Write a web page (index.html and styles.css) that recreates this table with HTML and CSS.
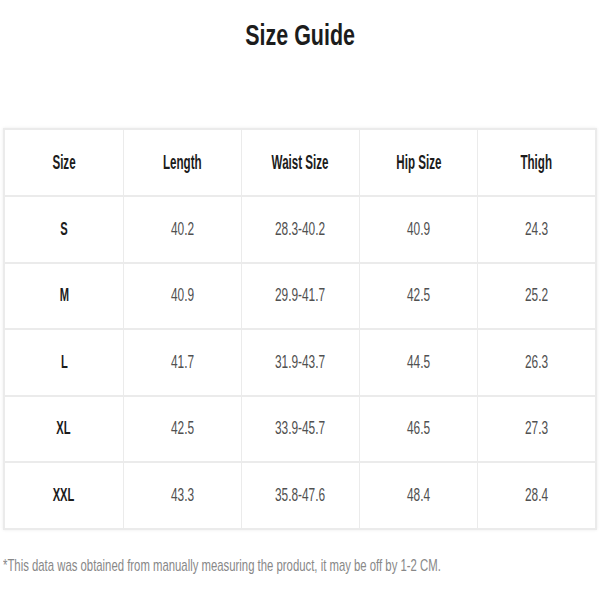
FILE: index.html
```html
<!DOCTYPE html>
<html>
<head>
<meta charset="utf-8">
<link rel="stylesheet" href="styles.css">
</head>
<body>
<div class="page">
  <h1 class="title"><span class="t">Size Guide</span></h1>
  <div class="table">
    <div class="row head">
      <div class="cell"><span class="t">Size</span></div><div class="cell"><span class="t">Length</span></div><div class="cell"><span class="t">Waist Size</span></div><div class="cell"><span class="t">Hip Size</span></div><div class="cell"><span class="t">Thigh</span></div>
    </div>
    <div class="row"><div class="cell size"><span class="t">S</span></div><div class="cell"><span class="t">40.2</span></div><div class="cell"><span class="t">28.3-40.2</span></div><div class="cell"><span class="t">40.9</span></div><div class="cell"><span class="t">24.3</span></div></div>
    <div class="row"><div class="cell size"><span class="t">M</span></div><div class="cell"><span class="t">40.9</span></div><div class="cell"><span class="t">29.9-41.7</span></div><div class="cell"><span class="t">42.5</span></div><div class="cell"><span class="t">25.2</span></div></div>
    <div class="row"><div class="cell size"><span class="t">L</span></div><div class="cell"><span class="t">41.7</span></div><div class="cell"><span class="t">31.9-43.7</span></div><div class="cell"><span class="t">44.5</span></div><div class="cell"><span class="t">26.3</span></div></div>
    <div class="row"><div class="cell size"><span class="t">XL</span></div><div class="cell"><span class="t">42.5</span></div><div class="cell"><span class="t">33.9-45.7</span></div><div class="cell"><span class="t">46.5</span></div><div class="cell"><span class="t">27.3</span></div></div>
    <div class="row"><div class="cell size"><span class="t">XXL</span></div><div class="cell"><span class="t">43.3</span></div><div class="cell"><span class="t">35.8-47.6</span></div><div class="cell"><span class="t">48.4</span></div><div class="cell"><span class="t">28.4</span></div></div>
  </div>
  <p class="note"><span class="t">*This data was obtained from manually measuring the product, it may be off by 1-2 CM.</span></p>
</div>
</body>
</html>
```
FILE: styles.css
```css
html, body { margin: 0; padding: 0; background: #fff; }
.page {
  width: 600px;
  height: 600px;
  font-family: "Liberation Sans", Arial, sans-serif;
  overflow: hidden;
}
.t { display: inline-block; white-space: nowrap; }
.title {
  margin: 0;
  padding-top: 17px;
  height: 128px;
  box-sizing: border-box;
  text-align: center;
  font-size: 29px;
  font-weight: bold;
  color: #1c1c1c;
  line-height: 36px;
}
.title .t { transform: scaleX(0.74); }
.table {
  margin: 0 3px;
  border: 2px solid #ebebeb;
  box-shadow: 0 0 3px rgba(0,0,0,0.08);
}
.row {
  display: grid;
  grid-template-columns: repeat(5, 1fr);
  height: 64.5px;
  border-top: 2px solid #ebebeb;
}
.row.head { border-top: none; height: 65px; }
.cell {
  display: flex;
  align-items: center;
  justify-content: center;
  border-left: 1px solid #ebebeb;
  font-size: 18px;
  color: #505050;
}
.cell .t { transform: scaleX(0.66); }
.cell:first-child { border-left: none; }
.head .cell { font-size: 20px; }
.head .cell .t { transform: scaleX(0.58); }
.head .cell, .cell.size { font-weight: bold; color: #1c1c1c; }
.cell.size .t { transform: scaleX(0.62); }
.note {
  margin: 26px 0 0 3px;
  font-size: 17px;
  line-height: 20px;
  color: #888;
}
.note .t { transform: scaleX(0.667); transform-origin: left center; }
```
